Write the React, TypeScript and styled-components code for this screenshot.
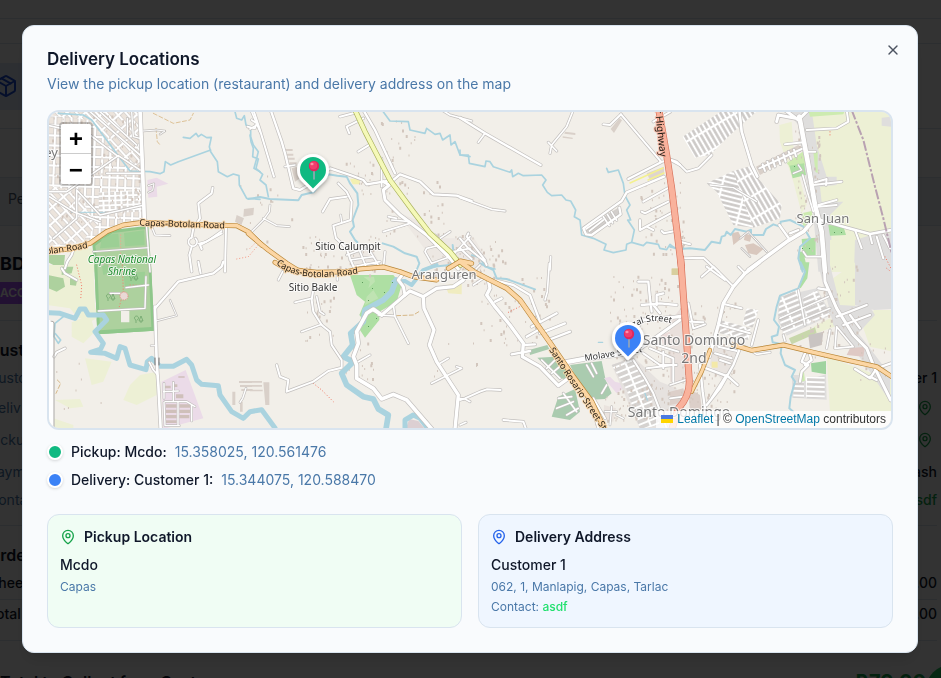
import React from "react";
import styled, { createGlobalStyle } from "styled-components";
import { MapPin, Package, X } from "lucide-react";

const GlobalStyle = createGlobalStyle`
  *, *::before, *::after { box-sizing: border-box; }
  html, body, #root { height: 100%; }
  body {
    margin: 0;
    overflow: hidden;
    background: #ffffff;
    color: #0f1729;
    font-family: Inter, "Liberation Sans", sans-serif;
    font-size: 14px;
    line-height: 20px;
  }
  h1, h2, h3, p, ul, dl, dd { margin: 0; padding: 0; }
`;

/* ---------- order page behind the dialog ---------- */

const OrderPage = styled.main`
  height: 100vh;
  overflow: hidden;
  display: flex;
  flex-direction: column;
`;

const Strip = styled.div<{ $height: number; $tint?: string }>`
  flex: none;
  display: flex;
  align-items: center;
  height: ${(p) => p.$height}px;
  padding: 0 0 6px 8px;
  border-bottom: 1px solid #d9e4ef;
  background: ${(p) => p.$tint ?? "transparent"};
  color: #4a5a70;
`;

const NavBand = styled(Strip)`
  padding: 0;
`;

const NavTile = styled.div`
  display: flex;
  align-items: center;
  width: 64px;
  height: 47px;
  margin-left: -6px;
  background: #dfe9fb;
  color: #1d4ed8;
`;

const Sheet = styled.section`
  flex: none;
  margin: 0 4px 0 -12px;
`;

const SheetTitle = styled.h2`
  padding: 28px 0 8px 12px;
  font-size: 18px;
  line-height: 20px;
  font-weight: 700;
`;

const Status = styled.span`
  display: inline-block;
  height: 22px;
  padding: 0 12px;
  background: #a855f7;
  color: #ffffff;
  font-size: 12px;
  line-height: 22px;
  font-weight: 600;
`;

const SheetHead = styled.div`
  height: 95px;
  border-bottom: 1px solid #d9e4ef;
`;

const SheetHeading = styled.h3<{ $top: number }>`
  padding-top: ${(p) => p.$top}px;
  font-size: 16px;
  line-height: 24px;
  font-weight: 600;
`;

const SheetRow = styled.div<{ $height: number; $strong?: boolean }>`
  display: flex;
  align-items: center;
  justify-content: space-between;
  height: ${(p) => p.$height}px;
  color: ${(p) => (p.$strong ? "#0f1729" : "#4a78a8")};
  font-weight: ${(p) => (p.$strong ? 500 : 400)};
`;

const Rule = styled.hr<{ $above?: number }>`
  height: 1px;
  margin: ${(p) => p.$above ?? 0}px 0 0;
  border: 0;
  background: #d9e4ef;
`;

const RowValue = styled.span<{ $icon?: boolean; $green?: boolean }>`
  display: flex;
  align-items: center;
  padding-right: ${(p) => (p.$icon ? 4 : 0)}px;
  color: ${(p) => (p.$green ? "#16a34a" : "#0f1729")};
  font-weight: 500;
`;

const Collect = styled.div`
  display: flex;
  justify-content: space-between;
  padding: 29px 11px 0 12px;
  font-size: 16px;
  line-height: 24px;
  font-weight: 600;
`;

const CollectSum = styled.span`
  color: #16a34a;
  font-size: 20px;
  font-weight: 700;
`;

const FloatingButton = styled.button`
  position: fixed;
  right: -40px;
  bottom: -42px;
  width: 56px;
  height: 56px;
  padding: 0;
  border: 0;
  border-radius: 50%;
  background: #22c55e;
`;

/* ---------- dialog ---------- */

const Backdrop = styled.div`
  position: fixed;
  inset: 0;
  display: flex;
  align-items: center;
  justify-content: center;
  padding-right: 1px;
  background: rgba(0, 0, 0, 0.8);
`;

const Dialog = styled.div`
  position: relative;
  display: flex;
  flex-direction: column;
  width: 100%;
  max-width: 896px;
  padding: 24px;
  border: 1px solid #d9e4ef;
  border-radius: 12px;
  background: #f9fbfd;
  box-shadow: 0 10px 15px -3px rgba(0, 0, 0, 0.1), 0 4px 6px -4px rgba(0, 0, 0, 0.1);
`;

const DialogHeader = styled.header`
  display: flex;
  flex-direction: column;
  gap: 6px;
  margin-bottom: 16px;
`;

const DialogTitle = styled.h1`
  font-size: 17px;
  line-height: 18px;
  font-weight: 600;
`;

const Muted = styled.p`
  color: #4a78a8;
`;

const CloseButton = styled.button`
  position: absolute;
  top: 16px;
  right: 16px;
  display: flex;
  padding: 0;
  border: 0;
  background: none;
  color: #4c5361;
  cursor: pointer;
`;

const MapFrame = styled.div`
  position: relative;
  height: 320px;
  overflow: hidden;
  border: 2px solid #d9e4ef;
  border-radius: 12px;
  background: #f2efe9;
`;

const MapDrawing = styled.svg`
  display: block;
  width: 100%;
  height: 100%;
`;

const ZoomControl = styled.div`
  position: absolute;
  top: 10px;
  left: 10px;
  display: flex;
  flex-direction: column;
  border: 2px solid rgba(0, 0, 0, 0.2);
  border-radius: 4px;
  background-clip: padding-box;
`;

const ZoomButton = styled.button`
  width: 30px;
  height: 30px;
  padding: 5px 0 0;
  border: 0;
  background: #ffffff;
  color: #000000;
  font: bold 24px/24px "Liberation Mono", monospace;
  cursor: pointer;
  &:first-child {
    border-bottom: 1px solid #cccccc;
    border-radius: 2px 2px 0 0;
  }
  &:last-child {
    border-radius: 0 0 2px 2px;
  }
`;

const Attribution = styled.div`
  position: absolute;
  right: 0;
  bottom: 0;
  padding: 0 5px;
  background: rgba(255, 255, 255, 0.8);
  color: #333333;
  font: 12px/17px "Liberation Sans", Arial, sans-serif;
  white-space: nowrap;
  a {
    color: #0078a8;
    text-decoration: none;
  }
  svg {
    display: inline-block;
    width: 12px;
    height: 8px;
    margin-right: 4px;
  }
`;

const Legend = styled.ul`
  display: flex;
  flex-direction: column;
  gap: 8px;
  margin: 12px 0 24px;
  list-style: none;
`;

const LegendItem = styled.li`
  display: flex;
  align-items: center;
  gap: 8px;
  font-weight: 500;
`;

const Dot = styled.span<{ $color: string }>`
  width: 16px;
  height: 16px;
  border: 2px solid #ffffff;
  border-radius: 50%;
  background: ${(p) => p.$color};
  box-shadow: 0 1px 3px rgba(0, 0, 0, 0.15);
`;

const Coordinates = styled.span`
  color: #4a78a8;
  font-weight: 400;
`;

const Cards = styled.div`
  display: grid;
  grid-template-columns: 1fr 1fr;
  gap: 16px;
`;

const Card = styled.section<{ $fill: string }>`
  display: flex;
  flex-direction: column;
  gap: 4px;
  padding: 12px;
  border: 1px solid #d9e4ef;
  border-radius: 12px;
  background: ${(p) => p.$fill};
`;

const CardTitle = styled.h2<{ $icon: string }>`
  display: flex;
  align-items: center;
  gap: 8px;
  margin-bottom: 4px;
  font-size: 14px;
  line-height: 20px;
  font-weight: 600;
  svg {
    color: ${(p) => p.$icon};
  }
`;

const CardName = styled.p`
  font-weight: 500;
`;

const CardLine = styled.p`
  color: #4a78a8;
  font-size: 12px;
  line-height: 16px;
  a {
    color: #22e06f;
    font-weight: 500;
    text-decoration: none;
  }
`;

/* ---------- map data: each sector is drawn at three units per pixel ---------- */

type Stroke = [string, number];
type Area = [string, string];
interface Sector {
  x: number;
  y: number;
  areas?: Area[];
  water?: Stroke[];
  tracks?: [string, string][];
  minor?: Stroke[];
  yellow?: Stroke[];
  orange?: Stroke[];
  red?: Stroke[];
  boundary?: string;
}

const FARM = "#edf0d5";
const PARK = "#add19e";
const GRASS = "#cdebb0";
const WOOD = "#aedfa3";
const BUILT = "#dfdedd";
const INDUSTRY = "#ebdbe8";
const CEMETERY = "#aacbaf";

const sectors: Sector[] = [
  {
    x: 40,
    y: 105,
    areas: [
      ["M20 15H300L313 345L250 350L150 405L20 430Z", "url(#town)"],
      ["M20 15H270L300 15L306 210L270 200L150 45L20 30Z", "url(#townSlant)"],
      ["M20 240L110 260L150 330L180 350L130 405L20 425Z", "url(#townSlant)"],
      ["M176 262L305 255L306 320L176 325Z", "url(#townFine)"],
      ["M322 225L350 218L385 236L350 245L352 275L325 278Z", INDUSTRY],
      ["M20 450L75 450L72 480L50 485L20 470Z", PARK],
      ["M90 440L155 430L165 500H85Z", FARM],
      ["M157 418L215 375L325 362L333 480L343 677L172 688L163 480Z", "#8fc78b"],
      ["M166 422L218 384L317 372L325 480L334 665L180 676L172 480Z", PARK],
      ["M185 402L220 386L235 386L238 425L180 430Z M252 384L312 376L314 420L255 424Z", "#9ccf95"],
      ["M590 330L612 340L604 360L585 350ZM612 312L642 308L640 330L610 335Z", "#d9d0c9"],
    ],
    water: [
      ["M55 25L130 30L155 45L235 152L270 198L330 200L360 206L372 200L376 170L392 180L415 170L512 135", 5],
      ["M430 97L450 100L468 85L475 95L484 88L500 98L514 97L508 125L512 140L532 170L535 200L562 215L580 207L597 212L598 240L620 280L660 283", 5],
      ["M585 20L590 40L605 45L613 32L618 60L632 65L632 95L640 120L655 140L650 160L642 190L660 200", 5],
      ["M95 322H200", 3],
    ],
    tracks: [
      ["M340 25L400 55L450 45L460 25M348 70L352 110L362 122", "#d1ab6c"],
      ["M655 420L625 455L590 462M242 390V480", "#f4a08c"],
    ],
    minor: [
      ["M300 15L308 200L313 345", 11],
      ["M318 345L330 500", 4],
      ["M20 60L150 90L235 155M150 20L300 150M180 20L290 120M20 270L100 320L180 350M235 152L80 260L20 260M235 152L300 195M200 205L306 205M110 255L110 340L40 400M110 255L180 330L313 300", 5],
      ["M262 40V90M275 20L280 95L300 100", 4],
      ["M518 248L515 265L475 295L480 340L460 370L455 398", 6],
      ["M455 398A13 13 0 1 0 466 400M476 416L500 410L545 378", 5],
      ["M558 368L555 500M455 425L448 450L455 500M545 385L480 420L485 432", 6],
      ["M335 365L345 390L390 392", 4],
      ["M310 78L350 75L375 78L360 88", 3],
      ["M75 490L82 470L95 450L100 435", 6],
      ["M160 440L325 428", 3],
      ["M325 242L342 236L338 256L325 262", 3],
      ["M622 65L645 70L650 55L635 45M635 20L660 80", 5],
    ],
    orange: [["M20 437L90 432L150 415L200 380L250 360L310 352L420 357L540 361L590 362L625 380L665 420", 11]],
  },
  {
    x: 40,
    y: 265,
    areas: [
      ["M20 0H160L165 130L190 150L150 170L110 155L90 130L20 120Z", FARM],
      ["M95 172L150 150L165 200L130 235L95 215Z", FARM],
      ["M135 280L215 290L190 350L155 360Z", FARM],
      ["M270 360L300 330L350 320V390L290 420L250 405Z", FARM],
      ["M45 405L120 402L130 425L90 430Z M40 460L100 480V492H20Z", FARM],
      ["M25 30L70 40L75 65L50 80L25 70ZM65 5L100 5L95 25L65 30ZM90 40L112 42L108 62L90 60Z", PARK],
      ["M163 0L172 208L343 197L333 -10Z", "#8fc78b"],
      ["M172 0L180 196L334 186L325 -10Z", PARK],
      ["M185 0H240V12L190 30Z M250 25L315 20L312 60L255 66Z", "#9ccf95"],
      ["M243 137H268V172H243Z", "#f2efe9"],
      ["M365 350L437 315L490 460L370 492Z", INDUSTRY],
      ["M20 165H36L43 175V492H20Z", "#ffffff"],
      ["M378 418H410V428H378ZM378 434H410V444H378ZM378 450H410V460H378ZM378 466H410V474H378ZM418 418H450V428H418ZM418 434H450V444H418ZM418 450H448V460H418ZM372 362H392V370H372ZM400 358H412V366H400ZM408 388H430V400H408ZM415 334H434V338H415Z", "#cfc0ba"],
      ["M597 348H636V354H597ZM600 360H636V366H600ZM604 372H638V378H604ZM577 380H586V420H577ZM600 410H608V440H600Z", "#d9d0c9"],
    ],
    water: [
      ["M20 143L60 145L105 160L120 132L135 132L145 150L190 150L200 165L165 200L190 235L182 252L152 262L195 265L230 280L240 245L255 250L270 300L318 314L322 290L335 280L360 304L400 304L440 283L455 300L470 345L485 358L535 362L540 390L575 440L610 460L630 440L665 434L705 489", 15],
      ["M70 155L45 175L42 215L55 235L62 225L45 205", 5],
    ],
    tracks: [
      ["M110 0L125 60L122 105M247 0L250 80L238 125M270 60L330 62", "#f0806c"],
      ["M52 345L62 355L48 385", "#c79a55"],
    ],
    minor: [
      ["M345 125L350 290L355 360L362 492", 8],
      ["M345 130L415 50L520 25L545 5L550 -10", 7],
      ["M482 25L475 -10", 6],
      ["M348 168L410 152L390 105M333 242H348", 3],
      ["M328 292L340 315L352 328", 5],
      ["M375 410H440L465 425M372 412L375 482H418M414 412V482M455 420V468M370 380L415 378M400 352V408M372 355V400", 4],
      ["M175 138L315 130L318 35M258 68L325 60M210 85L240 85", 4],
      ["M42 275L50 262L75 250M65 10L75 25L110 45", 6],
      ["M618 370L608 400L600 412", 4],
    ],
  },
  {
    x: 250,
    y: 105,
    areas: [
      ["M300 440L365 430L390 475L320 492ZM440 320L500 345L560 400L640 400L660 480L560 480Z", "#ede8e3"],
      ["M105 132H128V138H105ZM108 146H130V152H108ZM112 158H134V164H112ZM118 172H140V178H118ZM125 190L140 185L150 220L135 230Z", "#d9d0c9"],
      ["M300 222L330 218V238H308Z", "#f3f0b0"],
    ],
    water: [
      ["M0 90L3 110L10 130L8 155L25 162L18 190L38 208L30 225L48 240L55 275", 5],
      ["M-5 282L30 276L60 282L145 286L155 270L190 262L235 208L262 212L290 215L300 235L322 265L325 300L308 345L312 365L300 380L315 405L322 412", 6],
      ["M398 18L420 48L475 50L480 75L525 85L530 70L555 88L570 85L578 105L600 90L603 120L615 110L630 150L660 155", 5],
      ["M398 415L430 425L465 445L500 455L508 475L500 495M530 490L550 485L600 480L612 455L608 420", 6],
    ],
    tracks: [["M0 430L15 415L25 405", "#f4a08c"]],
    minor: [
      ["M10 15L30 75L72 215", 6],
      ["M62 15L95 110L105 145L130 250L150 255L185 235L240 190L300 210L340 225L350 238L430 225L450 208L510 230L550 268L620 272L665 288", 7],
      ["M340 15L375 75L435 205", 7],
      ["M400 230L418 240L400 255L405 285L450 330L530 390L600 460L625 492", 9],
      ["M265 235L290 260L305 290L302 345L250 362L258 400L290 430L300 460L315 495", 6],
      ["M290 275L240 282L218 320", 6],
      ["M60 300L58 320L40 345L0 385M40 340L80 362L118 365M272 330L275 350", 4],
      ["M425 345L480 350M400 380L480 355M415 335L440 340M395 245V160", 5],
      ["M290 65L340 40M290 65L298 85M270 35L320 22M325 140L365 115", 6],
      ["M530 430L570 420L600 455L545 475L525 440ZM570 400L600 380M600 460L660 395M610 440L660 430M555 390L600 440", 5],
      ["M300 465L370 455M290 450L345 430M310 485L390 470M330 440L350 490M355 430L385 480M405 440L400 490", 5],
      ["M560 5L600 30L665 48M105 185L135 180", 5],
      ["M0 72L20 60", 5],
    ],
    yellow: [["M315 15L345 80L420 225L490 320L540 385L600 440L632 480", 12]],
    orange: [["M-5 386L55 435L110 475L150 500", 11]],
  },
  {
    x: 250,
    y: 265,
    areas: [
      ["M300 30L430 30L455 60L440 110L388 140V165L345 218L330 195L345 170L328 150L345 110L320 90Z", WOOD],
      ["M355 70L375 50L372 35L340 35L360 50ZM345 120L385 100L370 75L350 95Z", "#bfe3b2"],
      ["M468 489L478 462L505 468L525 492Z", "#dccfd2"],
      ["M0 348H36V353H0ZM0 360H36V365H0ZM0 374H38V379H0ZM40 352H58V420H46Z", "#d9d0c9"],
      ["M585 60L635 55V88L595 85Z", "#f0ecc0"],
    ],
    water: [
      ["M438 45L425 80L400 105L345 135L340 170L302 205L308 240L280 275L310 290L275 325L290 360L340 395L370 402L385 432L415 450L408 492", 17],
      ["M465 492L465 465L490 450L510 460L535 492", 15],
      ["M430 50L465 48L485 60L520 15L560 0", 12],
    ],
    tracks: [
      ["M190 355L215 375L250 410", "#f0806c"],
      ["M440 152L490 150L510 138", "#c79a55"],
    ],
    minor: [
      ["M370 135L395 150L430 120L465 90L460 65L445 45L460 25", 9],
      ["M395 150L370 132L350 145L320 200L325 235L310 275L320 300V340L370 370L395 402L430 388L470 405L545 492", 11],
      ["M465 90L480 78L520 95L560 70L610 65L640 45", 10],
      ["M520 98L522 130L552 195L538 240L560 290L625 390L615 492", 10],
      ["M430 120L435 155L475 235M385 150L435 153", 5],
      ["M545 355L635 310L620 305M570 295L595 280M625 400L645 402L660 410M630 480L648 472", 5],
      ["M192 60L185 105L190 140L215 180L240 200L245 240L275 285L275 308L235 318L190 350L110 380L115 345L90 335L80 300", 6],
      ["M135 112L185 100M155 200L215 178M200 95L210 140L222 148M325 290L360 270M85 45L98 20M262 45V15", 5],
    ],
    orange: [
      ["M75 -8L110 12L200 22L290 20L330 12L400 6L450 20L490 35L560 45", 11],
      ["M595 10L632 -12L665 -5", 11],
    ],
  },
  {
    x: 460,
    y: 105,
    areas: [
      ["M370 372L480 305L482 330L395 392Z", "#d2cecb"],
      ["M560 205L612 185V215L570 225Z", "#dfd5cf"],
      ["M315 80L346 84V90L313 86ZM308 94L338 98V102L308 98ZM452 72L478 40L486 46L462 84Z", "#d9d0c9"],
      ["M0 400L40 395L85 470L60 495H0Z", "#ede8e3"],
    ],
    water: [
      ["M0 135V150L25 150L28 175L75 185L78 168L90 170L100 185L150 202L155 195L158 215L175 205L190 212L245 210L258 225L248 240L262 262L275 272L305 270L318 285L332 288L347 315L343 335L360 345L365 390L400 400L438 418L432 435L460 443L498 435L500 418L515 412L550 422L560 412L595 418L600 430L620 434L630 418L645 430", 5],
      ["M440 190L445 202L475 195L490 235L495 272L510 300L500 315L512 345L503 345L523 375L515 412", 5],
      ["M35 450L60 458L75 485L105 492", 5],
    ],
    tracks: [],
    minor: [
      ["M0 38L75 85L242 180", 7],
      ["M75 85L55 112M340 15L320 65L275 120M265 112L290 138M275 120L270 145", 5],
      ["M430 58L450 60L483 28", 6],
      ["M483 28L603 170", 6],
      ["M603 172L505 222M612 215L500 262L485 288L440 320L370 370L378 388L395 390L482 328L478 308", 7],
      ["M388 378L430 345M378 372L425 340M430 335L448 362M442 328L458 354M454 320L470 346", 5],
      ["M600 172L630 164L660 180M580 50L630 21", 6],
      ["M550 290L622 250M545 320L555 325L625 290M540 375L632 325M540 345V375M605 378L612 385L645 378M560 365L580 375", 6],
      ["M0 278L95 313L135 318M270 495L272 455", 5],
      ["M0 400L25 430L75 470L80 480M20 395L75 465M0 430L35 462M20 395L25 385", 6],
    ],
  },
  {
    x: 460,
    y: 265,
    areas: [
      ["M207 255L262 240L268 252L210 270Z", CEMETERY],
      ["M232 278L285 275L340 345L295 340Z", CEMETERY],
      ["M330 300L425 288L437 345L455 385L435 402L380 405Z", CEMETERY],
      ["M295 395L345 372L360 440L330 465L275 455Z", CEMETERY],
      ["M432 340L450 335L465 350L505 360L470 385Z", INDUSTRY],
      ["M455 300L520 275L600 350L650 370V492H540Z", "#e6e2df"],
      ["M455 300L520 278L545 320L580 385L575 420L600 480L540 492L500 375Z", "url(#estateSteep)"],
      ["M600 210L660 190V230L610 240ZM615 170L660 160V190Z", "#ecdcda"],
      ["M635 12H660V30H635Z", "#e0d9b0"],
      ["M432 420L468 430L460 470L430 465Z", "#eae3de"],
    ],
    water: [
      ["M60 -5L100 15L110 40L140 42L225 73", 6],
      ["M415 232H428M555 385L562 405", 4],
    ],
    tracks: [["M145 142L185 122", "#f0806c"]],
    minor: [
      ["M85 45L90 70L80 90L105 125L150 180L190 235L187 275L240 305L295 362L325 340", 10],
      ["M100 45L160 60L210 90L225 130L240 170", 7],
      ["M255 105L262 80L268 -5", 5],
      ["M215 185L290 145M240 205L315 175M265 225L330 200M200 215L235 195M155 268L210 258M190 240L225 238M105 110L125 100", 7],
      ["M315 292L380 280L500 265", 13],
      ["M500 280L660 165M520 210L545 165L600 160L660 155", 9],
      ["M245 285L300 340M260 310L290 280M275 325L305 300M380 300L400 335M395 295L410 325M310 385L350 440M295 400L335 395M290 430L340 410M320 450L355 430M425 385L440 360", 5],
      ["M0 405L15 400L60 380L80 373L122 375M370 385L400 440L415 489M130 465L190 470L198 492M400 400L435 460", 6],
      ["M535 50L565 50L570 100L575 140M545 120L600 115L650 120M590 120V90L610 85M600 145L580 120", 7],
      ["M520 285L555 340L580 385L620 489M550 265L600 300L650 300M570 250L640 280L640 350M590 240L655 260M560 310L640 300M610 260V310", 6],
      ["M435 440H470M455 425L450 480M470 450L490 460", 4],
      ["M60 0L30 30L0 40M40 60L70 40", 5],
    ],
    orange: [["M0 -10L45 22L90 45L140 70L180 105L220 162L275 240L340 335L395 410L435 495", 12]],
  },
  {
    x: 670,
    y: 105,
    areas: [
      ["M415 15H670V500H480L460 350L440 200Z", FARM],
      ["M328 60L365 50L372 150L410 300L395 325L370 230L330 110Z", FARM],
      ["M345 15H425L440 120L470 215L500 215V240L450 245L455 290L520 290L480 330L490 500H445L430 330L400 180L385 60Z", BUILT],
      ["M480 405L560 400L552 500H480Z", FARM],
      ["M555 405L620 385H670V500H552Z", BUILT],
      ["M635 38L663 35V65L635 62Z", BUILT],
      ["M430 140H443V205L436 200ZM415 15L525 15L520 28L420 35ZM395 325L425 318L430 345L400 365ZM350 175L398 140L408 180L360 185Z", GRASS],
      ["M358 182L402 175L408 210L368 220ZM475 360L520 362L528 390L480 392ZM395 402L437 398V450L400 458ZM385 440L400 440L412 495H392Z", WOOD],
      ["M38 95L160 15H265L180 90L120 150L75 158Z", "url(#estateSlant)"],
      ["M110 235L190 198L250 368L190 360L140 260Z", "url(#estateFlat)"],
      ["M190 198L245 182L260 215L335 300L330 340L250 368Z", "url(#estateSlant)"],
      ["M258 185L385 120L400 135L270 210Z", "#d9d0c9"],
      ["M185 385L205 380L215 400L190 420ZM225 385L245 392L240 410L222 405ZM225 420L250 415L280 432L260 450L235 445Z", "#d9c8be"],
    ],
    water: [
      ["M0 425L30 432L60 430L105 435L125 410L150 415L155 395L165 392L170 380L182 390L195 372L230 380L243 374V390L280 390L288 372L310 358L330 365L332 350L360 345L400 365L420 400L390 425L385 460L398 500", 6],
    ],
    tracks: [["M645 455L663 490M480 80V90", "#f0806c"]],
    minor: [
      ["M208 15L215 80L245 180L262 215", 8],
      ["M0 163L20 170L50 200L85 190L125 150", 6],
      ["M388 35L415 180L435 300L455 380L465 500", 14],
      ["M320 50L325 30L388 42L415 15M345 15L385 45", 9],
      ["M410 75L500 70L535 50L530 15", 6],
      ["M345 118L400 112M415 140H436M430 240L515 230M445 300L500 285M445 305L500 300M435 232L470 222L468 240", 6],
      ["M440 335L400 380L350 410L235 495", 11],
      ["M328 360L360 405M360 385L385 375", 7],
      ["M435 340L520 365L600 387L665 375", 8],
      ["M555 375L575 430M600 390L606 415M620 395L640 460M640 390L660 430", 6],
      ["M40 460L100 458L145 500M30 410L60 418", 6],
      ["M400 440L410 455L455 455L460 430M398 210L412 260L430 320", 5],
      ["M268 190L395 132M278 178L285 198M292 170L300 192M308 163L315 185M324 156L331 178M340 148L347 170M356 140L363 162M372 134L378 154", 6],
      ["M370 205L395 195L385 180", 4],
      ["M120 240L190 248L260 290", 4],
      ["M210 400L235 380L290 440M215 430L240 455", 3],
    ],
    boundary: "M545 15L580 105L615 245L640 340L665 445",
    red: [["M-34 12L-10 150L5 250L34 485", 17]],
  },
  {
    x: 670,
    y: 265,
    areas: [
      ["M0 170L40 120L45 350H0Z", "#e9e0dc"],
      ["M55 370L90 390L95 430L60 440Z M0 380L40 370L50 410L0 420Z", "#dccfc9"],
      ["M475 50L555 -8V125L510 140Z", FARM],
      ["M470 275L663 345V440H480Z", FARM],
      ["M430 185L480 160L500 182L440 205Z", FARM],
      ["M580 190L612 135H670V260L600 245Z", FARM],
      ["M555 -8H670V132L612 135L555 120Z", BUILT],
      ["M445 0H480L510 120L600 125L615 150L565 205L600 250L660 330V410L600 320L550 250L490 180Z", BUILT],
      ["M325 95L440 70L485 150L350 212L325 170Z", BUILT],
      ["M330 100L385 72L395 125L410 175L340 208L325 150Z", "url(#estateLow)"],
      ["M398 100L440 75L480 150L412 178Z", "url(#estateLow)"],
      ["M357 220L435 187L440 205L365 238Z", "#c8d7ab"],
      ["M397 -8H418L412 40L392 70L385 65L405 20Z", WOOD],
      ["M423 295L468 288V328L425 320Z", "#9fd39f"],
      ["M388 325L402 322L405 350L390 355Z", GRASS],
      ["M366 330H390L395 350L468 328L470 404L366 398Z", BUILT],
      ["M408 335H464V400H408Z", "url(#estateRows)"],
      ["M370 352H402V398H370Z", "url(#estateRows)"],
      ["M230 130L265 135L248 188L218 178ZM150 165L242 190L235 225L150 205Z", "url(#estateLow)"],
      ["M130 235L205 250L160 350L120 300Z", "#e9e4e0"],
      ["M415 210L460 200L455 240L420 250Z", "#c9c4c2"],
      ["M540 250L585 245L580 275L530 270Z", "#dfc9c4"],
      ["M5 10H25V30H5Z", "#d8cf9e"],
      ["M125 290H143V308H125Z", "#f3e9a8"],
    ],
    water: [
      ["M392 -8L405 20L385 70L330 92L320 125L312 165L327 185L322 210L305 215L308 232L335 238L332 265L345 300L375 315L365 335L375 350L362 395L358 430L370 440", 6],
    ],
    tracks: [["M650 10L663 20", "#f0806c"]],
    minor: [
      ["M268 -8L225 25L190 65L160 115L145 180L118 275", 10],
      ["M90 300L98 380L105 430M95 305L175 335L203 360", 7],
      ["M212 245L190 300L150 370L110 420M170 330L125 400", 7],
      ["M462 -15L465 50L500 130L550 210L590 250L610 300L662 405", 9],
      ["M500 155L590 120M520 180L600 150M540 150L570 190M445 70L475 75", 7],
      ["M405 265L395 290L415 300L395 320L390 350M420 270L425 285L405 300", 7],
      ["M555 312L600 340L620 310L663 295M600 335L620 345", 7],
      ["M165 118L215 130M95 35L130 5L190 65M110 5L165 45M205 5L225 25", 6],
      ["M55 115L70 190L105 178M60 170L100 172M0 160L40 150", 6],
      ["M145 245L200 258M135 265L185 280M150 285L180 295M265 165L245 240M150 180L240 205", 6],
      ["M225 245L260 268L300 262M340 210L345 228M480 195L470 250M500 185L495 250L550 245L500 185", 5],
      ["M330 160L475 95M335 190L480 130M385 75L405 180", 5],
      ["M0 360L60 340M0 400L40 395", 5],
    ],
    red: [["M32 -20L48 200L58 350Q58 395 25 430L5 495", 17]],
    orange: [
      ["M190 240L245 256L340 240L430 262L530 285L620 305L670 338", 11],
      ["M120 255L95 320L65 380", 9],
    ],
  },
];

const clusters: [number, number, number, number, number][] = [
  [52, 114, 88, 108, 160], [100, 250, 20, 25, 6], [430, 232, 45, 45, 70], [385, 178, 60, 60, 40],
  [300, 235, 80, 40, 50], [455, 240, 50, 45, 60], [480, 275, 70, 70, 60], [345, 160, 30, 35, 20],
  [305, 280, 30, 60, 20], [345, 340, 30, 40, 20], [640, 180, 45, 80, 50], [610, 275, 75, 60, 60],
  [615, 345, 60, 75, 80], [680, 300, 55, 110, 100], [795, 130, 25, 120, 70], [820, 265, 40, 80, 40],
  [230, 175, 90, 80, 16], [795, 310, 40, 50, 30], [590, 395, 40, 30, 20],
  [420, 340, 60, 40, 8], [50, 350, 60, 60, 8], [860, 340, 25, 40, 14], [375, 115, 40, 60, 20],
];

const buildings = (() => {
  let seed = 17;
  const next = () => {
    seed = (seed * 16807) % 2147483647;
    return seed / 2147483647;
  };
  let d = "";
  clusters.forEach(([x, y, w, h, n]) => {
    for (let i = 0; i < n; i += 1) {
      const px = Math.round((x + next() * w) * 10) / 10;
      const py = Math.round((y + next() * h) * 10) / 10;
      const s = next() > 0.7 ? 2 : 1;
      d += `M${px} ${py}h${s}v${s + 1}h-${s}z`;
    }
  });
  return d;
})();

type RoadKind = "minor" | "yellow" | "orange" | "red";
const roadPaint: Record<RoadKind, [string, string]> = {
  minor: ["#ffffff", "#c2bfbd"],
  yellow: ["#f5f9b8", "#a9b15c"],
  orange: ["#fcd6a4", "#b98637"],
  red: ["#f9b29c", "#d9735c"],
};

const place = (s: Sector) => `translate(${s.x} ${s.y}) scale(0.33333)`;

function Roads({ kind }: { kind: RoadKind }) {
  const [fill, casing] = roadPaint[kind];
  return (
    <>
      {[casing, fill].map((color, pass) =>
        sectors.map((s) => (
          <g key={`${color}${s.x}-${s.y}`} transform={place(s)} stroke={color}>
            {(s[kind] ?? []).map(([d, w]) => (
              <path key={d} d={d} strokeWidth={pass === 0 ? w + 4 : w} />
            ))}
          </g>
        )),
      )}
    </>
  );
}

interface StreetPatternProps {
  id: string;
  width: number;
  height: number;
  angle: number;
  block: string;
}

function StreetPattern({ id, width, height, angle, block }: StreetPatternProps) {
  return (
    <pattern id={id} width={width} height={height} patternUnits="userSpaceOnUse" patternTransform={`rotate(${angle})`}>
      <rect width={width} height={height} fill="#ffffff" />
      <rect x={4} y={4} width={width - 8} height={height - 8} fill={block} stroke="#cfccc9" strokeWidth={2} />
    </pattern>
  );
}

function Tree({ x, y }: { x: number; y: number }) {
  return (
    <path
      transform={`translate(${x} ${y})`}
      d="M2 7V4M2 4A2 2 0 1 1 3 4M7 7V5M7 0L5 5H9Z"
      fill="none"
      stroke="#6fa56c"
      strokeWidth={0.8}
    />
  );
}

function Marker({ x, y, color }: { x: number; y: number; color: string }) {
  return (
    <g transform={`translate(${x} ${y})`}>
      <g filter="url(#markerShadow)">
        <path d="M0 22.6L-11.3 11.3A16 16 0 1 1 11.3 11.3Z" fill="#ffffff" />
      </g>
      <path d="M0 18.4L-9.2 9.2A13 13 0 1 1 9.2 9.2Z" fill={color} />
      <path d="M1 0V9" stroke="#9aa7b5" strokeWidth={1.6} strokeLinecap="round" />
      <circle cx={1} cy={-4} r={5.2} fill="#e0275c" />
      <circle cx={0.4} cy={-4.6} r={3.8} fill="#f23d6d" />
      <ellipse cx={-1} cy={-6} rx={1.6} ry={1.2} fill="#ff8fa8" />
    </g>
  );
}

const PlaceText = styled.text<{ $size?: number; $color?: string; $italic?: boolean }>`
  font-family: "Noto Sans", sans-serif;
  font-size: ${(p) => p.$size ?? 10}px;
  font-style: ${(p) => (p.$italic ? "italic" : "normal")};
  fill: ${(p) => p.$color ?? "#333333"};
  stroke: rgba(255, 255, 255, 0.75);
  stroke-width: 2px;
  stroke-linejoin: round;
  paint-order: stroke;
`;

const RoadText = styled(PlaceText)`
  font-size: 9px;
  fill: #1f1a12;
  stroke: rgba(252, 214, 164, 0.8);
`;

const HighwayText = styled(RoadText)`
  font-size: 10px;
  stroke: rgba(249, 178, 156, 0.8);
`;

function DeliveryMap() {
  return (
    <MapDrawing viewBox="0 0 842 316" preserveAspectRatio="xMidYMid slice" role="img" aria-label="Delivery map">
      <defs>
        <StreetPattern id="town" width={24} height={30} angle={2} block="#ece4dc" />
        <StreetPattern id="townSlant" width={22} height={36} angle={-42} block="#ece4dc" />
        <StreetPattern id="townFine" width={18} height={14} angle={-2} block="#e4dcd5" />
        <StreetPattern id="estateSlant" width={14} height={60} angle={-30} block="#cbc8c6" />
        <StreetPattern id="estateSteep" width={50} height={17} angle={-22} block="#d6d2d0" />
        <StreetPattern id="estateFlat" width={70} height={14} angle={14} block="#cbc8c6" />
        <StreetPattern id="estateLow" width={46} height={15} angle={-22} block="#d0cdcb" />
        <StreetPattern id="estateRows" width={70} height={14} angle={2} block="#d2cfcd" />
        <filter id="markerShadow" x="-50%" y="-50%" width="200%" height="200%">
          <feDropShadow dx="0" dy="2" stdDeviation="2" floodColor="#000000" floodOpacity="0.35" />
        </filter>
        <path id="botolanCurve" d="M276 264Q292 277 318 277Q340 277 366 272" />
        <path id="rosarioCurve" d="M549 350Q580 397 612 445" />
        <path id="rizalCurve" d="M627 332Q642 321 656 321Q664 321 674 324" />
      </defs>
      <g transform="translate(-49 -112)">
        {sectors.map((s) => (
          <g key={`${s.x}-${s.y}`} transform={place(s)}>
            {(s.areas ?? []).map(([d, fill]) => (
              <path key={d} d={d} fill={fill} />
            ))}
          </g>
        ))}
        <path d={buildings} fill="#d2c6bd" />
        <g fill="none" strokeLinecap="round" strokeLinejoin="round">
          {sectors.map((s) => (
            <g key={`${s.x}-${s.y}`} transform={place(s)}>
              {(s.water ?? []).map(([d, w]) => (
                <path key={d} d={d} stroke="#aad3df" strokeWidth={w} />
              ))}
              {(s.tracks ?? []).map(([d, color]) => (
                <path
                  key={d}
                  d={d}
                  stroke={color}
                  strokeWidth={color === "#d1ab6c" || color === "#c79a55" ? 2 : 3}
                  strokeDasharray={color === "#d1ab6c" || color === "#c79a55" ? "12 7" : "1 8"}
                />
              ))}
            </g>
          ))}
          <path d="M630 183L663 168M648 180L664 173" stroke="#f4f18f" strokeWidth={1.5} />
          <Roads kind="minor" />
          <Roads kind="yellow" />
          <Roads kind="orange" />
          <Roads kind="red" />
          {sectors.map((s) =>
            s.boundary ? (
              <path
                key={s.boundary}
                transform={place(s)}
                d={s.boundary}
                stroke="#b9a2b2"
                strokeWidth={6}
                strokeLinecap="butt"
                strokeDasharray="30 6 8 6"
              />
            ) : null,
          )}
          <path d="M54 428V323Q54 321 51 321" stroke="#a8a5a2" />
          <path d="M155 358V365M159 358V365" stroke="#777777" />
        </g>
        <circle cx={124} cy={296} r={4} fill="#e9d9d4" stroke="#e68a7c" strokeDasharray="1 1" />
        <Tree x={106} y={294} />
        <Tree x={129} y={274} />
        <Tree x={134} y={316} />
        <path
          fill="#5c9a5c"
          d="M362 282h1v1h-1zM372 288h1v1h-1zM368 300h1v1h-1zM384 292h1v1h-1zM392 282h1v1h-1zM368 326h1v1h-1zM376 318h1v1h-1zM794 166h1v1h-1zM834 232h1v1h-1zM841 232h1v1h-1zM802 248h1v1h-1zM809 248h1v1h-1z"
        />

        <PlaceText x={58} y={157} textAnchor="end" $size={13} $color="#777777">ey</PlaceText>
        <RoadText x={182} y={227} textAnchor="middle" transform="rotate(2 182 227)">Capas-Botolan Road</RoadText>
        <RoadText x={88} y={248} textAnchor="end" transform="rotate(-9 88 248)">Capas-Botolan Road</RoadText>
        <RoadText>
          <textPath href="#botolanCurve">Capas-Botolan Road</textPath>
        </RoadText>
        <RoadText>
          <textPath href="#rosarioCurve">Santo Rosario Street Street</textPath>
        </RoadText>
        <PlaceText $size={9}>
          <textPath href="#rizalCurve">Rizal Street</textPath>
        </PlaceText>
        <PlaceText x={585} y={361} $size={9} transform="rotate(-9 585 361)">Molave Street</PlaceText>
        <HighwayText x={660} y={157} textAnchor="end" transform="rotate(84 660 157)">MacArthur Highway</HighwayText>
        <PlaceText x={122} y={263} textAnchor="middle" $italic $color="#1c8a2c">Capas National</PlaceText>
        <PlaceText x={122} y={275} textAnchor="middle" $italic $color="#1c8a2c">Shrine</PlaceText>
        <PlaceText x={348} y={250} textAnchor="middle">Sitio Calumpit</PlaceText>
        <PlaceText x={313} y={291} textAnchor="middle">Sitio Bakle</PlaceText>
        <PlaceText x={444} y={279} textAnchor="middle" $size={13} $color="#777777">Aranguren</PlaceText>
        <PlaceText x={823} y={223} textAnchor="middle" $size={13} $color="#777777">San Juan</PlaceText>
        <PlaceText x={694} y={345} textAnchor="middle" $size={14} $color="#777777">Santo Domingo</PlaceText>
        <PlaceText x={694} y={363} textAnchor="middle" $size={14} $color="#777777">2nd</PlaceText>
        <PlaceText x={679} y={417} textAnchor="middle" $size={14} $color="#777777">Santo Domingo</PlaceText>

        <Marker x={313} y={170} color="#10b981" />
        <Marker x={628} y={338} color="#3b82f6" />
      </g>
    </MapDrawing>
  );
}

function BackgroundOrder() {
  return (
    <OrderPage aria-hidden="true">
      <Strip $height={19} />
      <Strip $height={25} />
      <NavBand $height={85}>
        <NavTile>
          <Package size={24} />
        </NavTile>
      </NavBand>
      <Strip $height={49} />
      <Strip $height={48} $tint="#f0f5fa">Pe</Strip>
      <Sheet>
        <SheetHead>
          <SheetTitle>BD</SheetTitle>
          <Status>ACC</Status>
        </SheetHead>
        <SheetHeading $top={17}>Cust</SheetHeading>
        <SheetRow $height={32}>
          <span>Custo</span>
          <RowValue>Customer 1</RowValue>
        </SheetRow>
        <SheetRow $height={28}>
          <span>Deliv</span>
          <RowValue $green $icon><MapPin size={16} /></RowValue>
        </SheetRow>
        <SheetRow $height={36}>
          <span>Picku</span>
          <RowValue $green $icon><MapPin size={16} /></RowValue>
        </SheetRow>
        <SheetRow $height={28}>
          <span>Paym</span>
          <RowValue>Cash</RowValue>
        </SheetRow>
        <SheetRow $height={28}>
          <span>Conta</span>
          <RowValue $green>asdf</RowValue>
        </SheetRow>
        <Rule $above={11} />
        <SheetHeading $top={17}>Orde</SheetHeading>
        <SheetRow $height={32} $strong>
          <span>Chee</span>
          <span>79.00</span>
        </SheetRow>
        <Rule />
        <SheetRow $height={28} $strong>
          <span>Total</span>
          <span>79.00</span>
        </SheetRow>
        <Rule $above={12} />
        <Collect>
          <span>Total to Collect from Customer</span>
          <CollectSum>₱79.00</CollectSum>
        </Collect>
      </Sheet>
      <FloatingButton type="button" tabIndex={-1} />
    </OrderPage>
  );
}

export default function App() {
  return (
    <>
      <GlobalStyle />
      <BackgroundOrder />
      <Backdrop>
        <Dialog role="dialog" aria-modal="true" aria-labelledby="dialog-title" aria-describedby="dialog-text">
          <DialogHeader>
            <DialogTitle id="dialog-title">Delivery Locations</DialogTitle>
            <Muted id="dialog-text">View the pickup location (restaurant) and delivery address on the map</Muted>
          </DialogHeader>
          <MapFrame>
            <DeliveryMap />
            <ZoomControl>
              <ZoomButton type="button" aria-label="Zoom in">+</ZoomButton>
              <ZoomButton type="button" aria-label="Zoom out">−</ZoomButton>
            </ZoomControl>
            <Attribution>
              <a href="#leaflet">
                <svg viewBox="0 0 12 8" aria-hidden="true">
                  <path fill="#4c7be1" d="M0 0h12v4H0z" />
                  <path fill="#ffd500" d="M0 4h12v4H0z" />
                </svg>
                Leaflet
              </a>
              {" | © "}
              <a href="#openstreetmap">OpenStreetMap</a>
              {" contributors"}
            </Attribution>
          </MapFrame>
          <Legend>
            <LegendItem>
              <Dot $color="#10b981" />
              <span>Pickup: Mcdo:</span>
              <Coordinates>15.358025, 120.561476</Coordinates>
            </LegendItem>
            <LegendItem>
              <Dot $color="#3b82f6" />
              <span>Delivery: Customer 1:</span>
              <Coordinates>15.344075, 120.588470</Coordinates>
            </LegendItem>
          </Legend>
          <Cards>
            <Card $fill="#f0fdf4">
              <CardTitle $icon="#16a34a">
                <MapPin size={16} />
                Pickup Location
              </CardTitle>
              <CardName>Mcdo</CardName>
              <CardLine>Capas</CardLine>
            </Card>
            <Card $fill="#eff6ff">
              <CardTitle $icon="#2563eb">
                <MapPin size={16} />
                Delivery Address
              </CardTitle>
              <CardName>Customer 1</CardName>
              <CardLine>062, 1, Manlapig, Capas, Tarlac</CardLine>
              <CardLine>
                Contact: <a href="#contact">asdf</a>
              </CardLine>
            </Card>
          </Cards>
          <CloseButton type="button" aria-label="Close">
            <X size={16} />
          </CloseButton>
        </Dialog>
      </Backdrop>
    </>
  );
}
